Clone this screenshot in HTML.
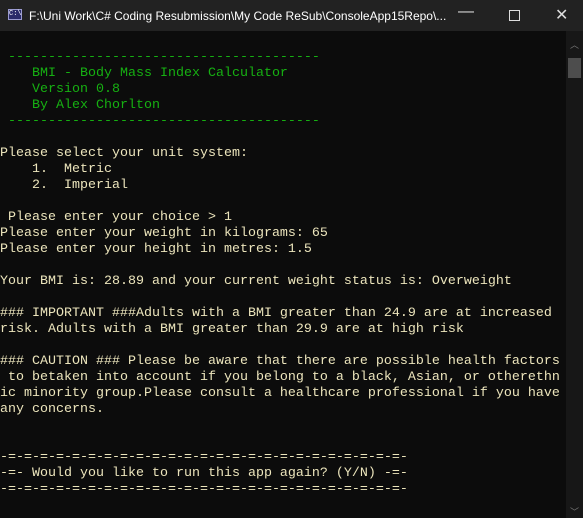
<!DOCTYPE html>
<html><head><meta charset="utf-8"><style>
html,body{margin:0;padding:0;width:583px;height:518px;overflow:hidden;background:#0c0c0c}
#tb{position:absolute;left:0;top:0;width:583px;height:31px;background:#222;color:#fff;font:12px "Liberation Sans",sans-serif}
#tb .t{position:absolute;left:29px;top:9px;white-space:nowrap}
#tb .ic{position:absolute;left:8px;top:9px;width:14px;height:11px;background:#2a2a6a;border:1px solid #9a9ad0;box-sizing:border-box;font:7px "Liberation Mono",monospace;color:#fff;line-height:9px;text-align:center}
#tb .b{position:absolute;top:5px;font:16px "Liberation Sans",sans-serif;color:#ddd}
#con{position:absolute;left:0;top:34px;width:566px;height:484px}
pre{margin:0;font:13.33px "Liberation Mono",monospace;line-height:16px;color:#ece5bc;white-space:pre}
.g{color:#16b012}
#sb{position:absolute;left:566px;top:31px;width:17px;height:487px;background:#171717}
#th{position:absolute;left:568px;top:58px;width:13px;height:20px;background:#4d4d4d}
</style></head><body>
<div id="tb"><div class="ic">C:\</div><div class="t">F:\Uni Work\C# Coding Resubmission\My Code ReSub\ConsoleApp15Repo\...</div>
<div class="b" style="left:458px;top:3px">—</div>
<div style="position:absolute;left:509px;top:10px;width:9px;height:9px;border:1px solid #ddd"></div>
<div class="b" style="left:555px;top:5px">✕</div></div>
<div id="con"><pre>

<span class="g"> ---------------------------------------
    BMI - Body Mass Index Calculator
    Version 0.8
    By Alex Chorlton
 ---------------------------------------</span>

Please select your unit system:
    1.  Metric
    2.  Imperial

 Please enter your choice &gt; 1
Please enter your weight in kilograms: 65
Please enter your height in metres: 1.5

Your BMI is: 28.89 and your current weight status is: Overweight

### IMPORTANT ###Adults with a BMI greater than 24.9 are at increased
risk. Adults with a BMI greater than 29.9 are at high risk

### CAUTION ### Please be aware that there are possible health factors
 to betaken into account if you belong to a black, Asian, or otherethn
ic minority group.Please consult a healthcare professional if you have
any concerns.


-=-=-=-=-=-=-=-=-=-=-=-=-=-=-=-=-=-=-=-=-=-=-=-=-=-
-=- Would you like to run this app again? (Y/N) -=-
-=-=-=-=-=-=-=-=-=-=-=-=-=-=-=-=-=-=-=-=-=-=-=-=-=-</pre></div>
<div id="sb"></div><div id="th"></div>
<div style="position:absolute;left:570px;top:38px;color:#777;font:9px 'DejaVu Sans',sans-serif">︿</div>
<div style="position:absolute;left:570px;top:505px;color:#777;font:9px 'DejaVu Sans',sans-serif">﹀</div>
</body></html>
